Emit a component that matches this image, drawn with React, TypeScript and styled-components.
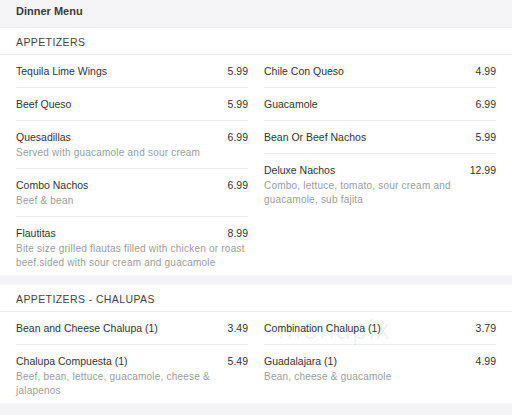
import React from "react";
import styled, { createGlobalStyle } from "styled-components";

const Global = createGlobalStyle`
  html, body { margin: 0; padding: 0; background: #f4f4f7; }
  body { font-family: "Liberation Sans", Arial, sans-serif; }
`;

const Page = styled.div`
  position: relative;
  width: 512px;
  min-height: 415px;
  background: #f4f4f7;
  overflow: hidden;
`;

const TitleBar = styled.div`
  padding: 4px 16px 9px;
  font-size: 11px;
  line-height: 14px;
  font-weight: bold;
  color: #3a3a3a;
  background: #f5f5f7;
  border-bottom: 1px solid #ececef;
`;

const Section = styled.section`
  background: #fff;
  margin-bottom: 10px;
`;

const SectionHeader = styled.div`
  height: 27px;
  box-sizing: border-box;
  padding: 7px 16px 0;
  font-size: 10.5px;
  line-height: 14px;
  letter-spacing: 0.4px;
  color: #444;
  text-transform: uppercase;
  border-bottom: 1px solid #ececec;
`;

const Grid = styled.div`
  display: grid;
  grid-template-columns: 1fr 1fr;
  column-gap: 16px;
  padding: 0 16px;
`;

const Column = styled.div`
  display: flex;
  flex-direction: column;
`;

const Item = styled.div`
  padding: 8px 0;
  border-bottom: 1px solid #ededed;
  &:last-child {
    border-bottom: none;
    padding-bottom: 5px;
  }
`;

const ItemRow = styled.div`
  display: flex;
  justify-content: space-between;
  align-items: baseline;
  font-size: 10.5px;
  line-height: 16px;
  color: #333;
`;

const Desc = styled.div`
  margin-top: 1px;
  font-size: 10px;
  line-height: 14px;
  letter-spacing: 0.22px;
  color: #9c9c9c;
`;

const Watermark = styled.div`
  position: absolute;
  left: 278px;
  top: 314px;
  font-size: 28px;
  font-family: "Liberation Sans", Arial, sans-serif;
  letter-spacing: 1px;
  color: rgba(0, 0, 0, 0.06);
  pointer-events: none;
`;

type MenuItem = { name: string; price: string; desc?: string };

const sections: { title: string; cols: MenuItem[][] }[] = [
  {
    title: "Appetizers",
    cols: [
      [
        { name: "Tequila Lime Wings", price: "5.99" },
        { name: "Beef Queso", price: "5.99" },
        { name: "Quesadillas", price: "6.99", desc: "Served with guacamole and sour cream" },
        { name: "Combo Nachos", price: "6.99", desc: "Beef & bean" },
        {
          name: "Flautitas",
          price: "8.99",
          desc: "Bite size grilled flautas filled with chicken or roast beef.sided with sour cream and guacamole",
        },
      ],
      [
        { name: "Chile Con Queso", price: "4.99" },
        { name: "Guacamole", price: "6.99" },
        { name: "Bean Or Beef Nachos", price: "5.99" },
        {
          name: "Deluxe Nachos",
          price: "12.99",
          desc: "Combo, lettuce, tomato, sour cream and guacamole, sub fajita",
        },
      ],
    ],
  },
  {
    title: "Appetizers - Chalupas",
    cols: [
      [
        { name: "Bean and Cheese Chalupa (1)", price: "3.49" },
        {
          name: "Chalupa Compuesta (1)",
          price: "5.49",
          desc: "Beef, bean, lettuce, guacamole, cheese & jalapenos",
        },
      ],
      [
        { name: "Combination Chalupa (1)", price: "3.79" },
        { name: "Guadalajara (1)", price: "4.99", desc: "Bean, cheese & guacamole" },
      ],
    ],
  },
];

export default function App() {
  return (
    <Page>
      <Global />
      <TitleBar>Dinner Menu</TitleBar>
      {sections.map((s) => (
        <Section key={s.title}>
          <SectionHeader>{s.title}</SectionHeader>
          <Grid>
            {s.cols.map((col, ci) => (
              <Column key={ci}>
                {col.map((it) => (
                  <Item key={it.name}>
                    <ItemRow>
                      <span>{it.name}</span>
                      <span>{it.price}</span>
                    </ItemRow>
                    {it.desc && <Desc>{it.desc}</Desc>}
                  </Item>
                ))}
              </Column>
            ))}
          </Grid>
        </Section>
      ))}
      <Watermark aria-hidden="true">menupix</Watermark>
    </Page>
  );
}
